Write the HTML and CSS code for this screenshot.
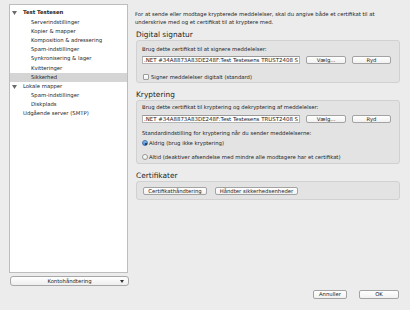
FILE: index.html
```html
<!DOCTYPE html>
<html lang="da">
<head>
  <meta charset="UTF-8" />
  <title>Kontoindstillinger</title>
  <link rel="stylesheet" href="styles.css">
</head>
<body>
  <div class="window">
    <aside class="sidebar">
      <ul class="tree">
        <li class="row top account">
          <svg class="disclosure" width="5" height="4" viewBox="0 0 5 4"><path d="M0 0 L5 0 L2.5 4 Z" fill="#6b6b6b"/></svg>
          Test Testesen
        </li>
        <li class="row child">Serverindstillinger</li>
        <li class="row child">Kopier &amp; mapper</li>
        <li class="row child">Komposition &amp; adressering</li>
        <li class="row child">Spam-indstillinger</li>
        <li class="row child">Synkronisering &amp; lager</li>
        <li class="row child">Kvitteringer</li>
        <li class="row child selected">Sikkerhed</li>
        <li class="row top">
          <svg class="disclosure" width="5" height="4" viewBox="0 0 5 4"><path d="M0 0 L5 0 L2.5 4 Z" fill="#6b6b6b"/></svg>
          Lokale mapper
        </li>
        <li class="row child">Spam-indstillinger</li>
        <li class="row child">Diskplads</li>
        <li class="row top">Udgående server (SMTP)</li>
      </ul>
      <div class="popup">
        <span>Kontohåndtering</span>
        <svg class="popup-arrow" width="4" height="3" viewBox="0 0 4 3"><path d="M0 0 L4 0 L2 3 Z" fill="#333"/></svg>
      </div>
    </aside>

    <main class="panel">
      <p class="intro">For at sende eller modtage krypterede meddelelser, skal du angive både et certifikat til at underskrive med og et certifikat til at kryptere med.</p>

      <section class="group">
        <h2>Digital signatur</h2>
        <div class="box box-sign">
          <p class="label">Brug dette certifikat til at signere meddelelser:</p>
          <div class="cert-row">
            <div class="field">.NET #34A8873A83DE248F:Test Testesens TRUST2408 S</div>
            <button class="btn btn-choose">Vælg...</button>
            <button class="btn btn-clear">Ryd</button>
          </div>
          <div class="option check-row">
            <span class="checkbox"></span>
            Signer meddelelser digitalt (standard)
          </div>
        </div>
      </section>

      <section class="group">
        <h2>Kryptering</h2>
        <div class="box box-crypt">
          <p class="label">Brug dette certifikat til kryptering og dekryptering af meddelelser:</p>
          <div class="cert-row">
            <div class="field">.NET #34A8873A83DE248F:Test Testesens TRUST2408 S</div>
            <button class="btn btn-choose">Vælg...</button>
            <button class="btn btn-clear">Ryd</button>
          </div>
          <p class="label label-default">Standardindstilling for kryptering når du sender meddelelserne:</p>
          <div class="option radio-row first">
            <span class="radio on"></span>
            Aldrig (brug ikke kryptering)
          </div>
          <div class="option radio-row">
            <span class="radio"></span>
            Altid (deaktiver afsendelse med mindre alle modtagere har et certifikat)
          </div>
        </div>
      </section>

      <section class="group">
        <h2>Certifikater</h2>
        <div class="box box-certs">
          <button class="btn btn-manage">Certifikathåndtering</button>
          <button class="btn btn-devices">Håndter sikkerhedsenheder</button>
        </div>
      </section>

      <div class="footer">
        <button class="btn btn-cancel">Annuller</button>
        <button class="btn btn-ok">OK</button>
      </div>
    </main>
  </div>
</body>
</html>
```

FILE: styles.css
```css
* {
  margin: 0;
  padding: 0;
  box-sizing: border-box;
}

body {
  width: 410px;
  height: 310px;
  overflow: hidden;
  background: #ececec;
  font-family: "DejaVu Sans", sans-serif;
  font-size: 5.3px;
  color: #222;
}

.window {
  display: flex;
  gap: 6px;
  height: 310px;
  padding: 4px 10px 11px 9px;
}

/* left column: account tree */
.sidebar {
  width: 120px;
  display: flex;
  flex-direction: column;
}

.tree {
  list-style: none;
  height: 269px;
  width: 119px;
  background: #fff;
  border: 1px solid #bdbdbd;
  padding-top: 3.4px;
}

.row {
  height: 9.2px;
  line-height: 9.2px;
  white-space: nowrap;
  position: relative;
}

.row.top {
  padding-left: 13px;
}

.row.account {
  font-weight: bold;
}

.row.child {
  padding-left: 21px;
}

.row.selected {
  background: #d5d5d5;
}

.disclosure {
  position: absolute;
  left: 2px;
  top: 3px;
}

.popup {
  margin: 3px 0 0 1px;
  height: 10px;
  width: 119px;
  border: 1px solid #a8a8a8;
  border-radius: 3px;
  background: linear-gradient(#ffffff, #eeeeee);
  display: flex;
  align-items: center;
  justify-content: center;
  position: relative;
  line-height: 8px;
}

.popup-arrow {
  position: absolute;
  right: 4px;
  top: 3px;
}

/* right column */
.panel {
  flex: 1;
  display: flex;
  flex-direction: column;
}

.intro {
  margin-top: 6px;
  line-height: 8px;
  padding-right: 10px;
}

.group h2 {
  font-size: 7.4px;
  font-weight: normal;
  line-height: 10px;
  margin-top: 4px;
  padding-left: 1px;
  color: #1e1e1e;
}

.group + .group h2 {
  margin-top: 7px;
}

.box {
  margin-left: 1px;
  background: #e3e3e3;
  border: 1px solid #d1d1d1;
  border-radius: 3px;
  padding: 0 0 0 5px;
}

.label {
  line-height: 8px;
}

.box-sign {
  height: 43px;
  padding-top: 4px;
}

.box-crypt {
  height: 64px;
  padding-top: 2px;
}

.box-certs {
  height: 19px;
  padding: 5px 0 0 6px;
  display: flex;
  gap: 8px;
}

.cert-row {
  display: flex;
  gap: 6px;
  margin-top: 3px;
}

.box-crypt .cert-row {
  margin-top: 4px;
}

.field {
  width: 158px;
  height: 8px;
  line-height: 7px;
  background: #fff;
  border: 1px solid #b4b4b4;
  border-top-color: #9a9a9a;
  padding-left: 1px;
  font-size: 5.45px;
  white-space: nowrap;
  overflow: hidden;
}

.btn {
  font-family: inherit;
  font-size: 5.3px;
  color: #222;
  height: 8px;
  line-height: 6px;
  background: linear-gradient(#ffffff, #f1f1f1);
  border: 1px solid #a3a3a3;
  border-radius: 2px;
  white-space: nowrap;
}

.btn-choose {
  width: 40px;
}

.btn-clear {
  width: 39px;
}

.btn-manage {
  width: 64px;
}

.btn-devices {
  width: 83px;
}

.option {
  display: flex;
  align-items: center;
  gap: 2px;
  height: 8px;
  line-height: 8px;
}

.check-row {
  margin-top: 9px;
  padding-left: 1px;
}

.checkbox {
  width: 6px;
  height: 6px;
  background: linear-gradient(#ffffff, #f0f0f0);
  border: 1px solid #9c9c9c;
  border-radius: 1px;
}

.label-default {
  margin-top: 6px;
}

.radio-row {
  gap: 1px;
  margin-top: 6px;
}

.radio-row.first {
  margin-top: 2px;
}

.radio {
  width: 6px;
  height: 6px;
  border-radius: 50%;
  background: linear-gradient(#ffffff, #eeeeee);
  border: 1px solid #989898;
  position: relative;
}

.radio.on {
  background: linear-gradient(#8dbdf0, #3c83d8);
  border-color: #4a74a8;
}

.radio.on::after {
  content: "";
  position: absolute;
  left: 1.5px;
  top: 1.5px;
  width: 2px;
  height: 2px;
  border-radius: 50%;
  background: #1b2a3c;
}

.footer {
  margin-top: auto;
  display: flex;
  justify-content: flex-end;
  gap: 12px;
  padding-right: 1px;
}

.btn-cancel {
  width: 34px;
  height: 9px;
  line-height: 7px;
}

.btn-ok {
  width: 40px;
  height: 9px;
  line-height: 7px;
}
```
